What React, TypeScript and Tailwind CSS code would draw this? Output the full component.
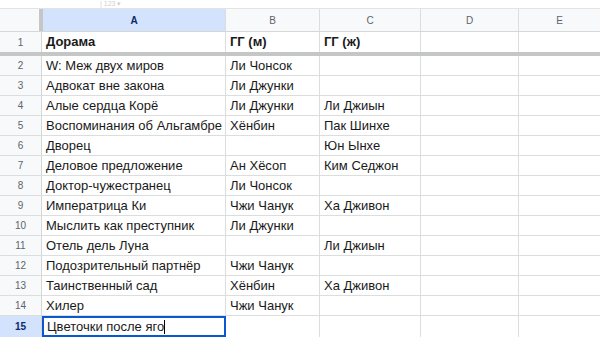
import React from "react";

const rows: [string, string, string][] = [
  ["W: Меж двух миров", "Ли Чонсок", ""],
  ["Адвокат вне закона", "Ли Джунки", ""],
  ["Алые сердца Корё", "Ли Джунки", "Ли Джиын"],
  ["Воспоминания об Альгамбре", "Хёнбин", "Пак Шинхе"],
  ["Дворец", "", "Юн Ынхе"],
  ["Деловое предложение", "Ан Хёсоп", "Ким Седжон"],
  ["Доктор-чужестранец", "Ли Чонсок", ""],
  ["Императрица Ки", "Чжи Чанук", "Ха Дживон"],
  ["Мыслить как преступник", "Ли Джунки", ""],
  ["Отель дель Луна", "", "Ли Джиын"],
  ["Подозрительный партнёр", "Чжи Чанук", ""],
  ["Таинственный сад", "Хёнбин", "Ха Дживон"],
  ["Хилер", "Чжи Чанук", ""],
];

const cell = "shrink-0 border-r border-[#dcdddd] flex items-center pl-[4px] overflow-hidden whitespace-nowrap";

export default function App() {
  return (
    <div
      className="w-[600px] h-[337px] overflow-hidden bg-white text-[13px] text-[#1a1a1a]"
      style={{ fontFamily: '"Liberation Sans", Arial, sans-serif' }}
    >
      <div className="h-[9px] border-b border-[#e2e3e3] flex items-start pl-[100px]">
        <span className="text-[7px] leading-[8px] text-[#cfcfcf]">| 123 ▾</span>
      </div>
      {/* Column header */}
      <div className="flex h-[23px] border-b border-[#d5d6d6] bg-[#f8f9fa] text-[10px] text-[#5f6368]">
        <div className="w-[43px] shrink-0 border-r-[4px] border-[#c4c7c5]" />
        <div className="w-[183px] shrink-0 bg-[#d3e3fd] text-[#0b2a6b] font-bold flex items-center justify-center border-r border-[#dcdddd]">A</div>
        <div className="w-[94px] shrink-0 flex items-center justify-center border-r border-[#dcdddd]">B</div>
        <div className="w-[101px] shrink-0 flex items-center justify-center border-r border-[#dcdddd]">C</div>
        <div className="w-[98px] shrink-0 flex items-center justify-center border-r border-[#dcdddd]">D</div>
        <div className="flex-1 flex items-center justify-center">E</div>
      </div>
      {/* Row 1 */}
      <div className="flex h-[20px] font-bold">
        <div className="w-[42px] shrink-0 bg-[#f8f9fa] border-r border-[#d5d6d6] text-[10px] text-[#5f6368] font-normal flex items-center justify-center">1</div>
        <div className={`w-[184px] ${cell}`}>Дорама</div>
        <div className={`w-[94px] ${cell}`}>ГГ (м)</div>
        <div className={`w-[101px] ${cell}`}>ГГ (ж)</div>
        <div className={`w-[98px] ${cell}`} />
        <div className="flex-1" />
      </div>
      <div className="h-[4px] bg-[#c4c7c5]" />
      {rows.map((r, i) => (
        <div key={i} className="flex h-[20px] border-b border-[#dcdddd]">
          <div className="w-[42px] shrink-0 bg-[#f8f9fa] border-r border-[#d5d6d6] text-[10px] text-[#5f6368] flex items-center justify-center">
            {i + 2}
          </div>
          <div className={`w-[184px] ${cell}`}>{r[0]}</div>
          <div className={`w-[94px] ${cell}`}>{r[1]}</div>
          <div className={`w-[101px] ${cell}`}>{r[2]}</div>
          <div className={`w-[98px] ${cell}`} />
          <div className="flex-1" />
        </div>
      ))}
      <div className="flex h-[21px]">
        <div className="w-[42px] shrink-0 bg-[#d3e3fd] border-r border-[#d5d6d6] text-[10px] text-[#0b2a6b] font-bold flex items-center justify-center">
          15
        </div>
        <div className="w-[184px] shrink-0 border-2 border-[#0b57d0] flex items-center pl-[3px] whitespace-nowrap">
          Цветочки после яго<span className="inline-block w-[1px] h-[14px] bg-black" />
        </div>
        <div className={`w-[94px] ${cell}`} />
        <div className={`w-[101px] ${cell}`} />
        <div className={`w-[98px] ${cell}`} />
        <div className="flex-1" />
      </div>
    </div>
  );
}
